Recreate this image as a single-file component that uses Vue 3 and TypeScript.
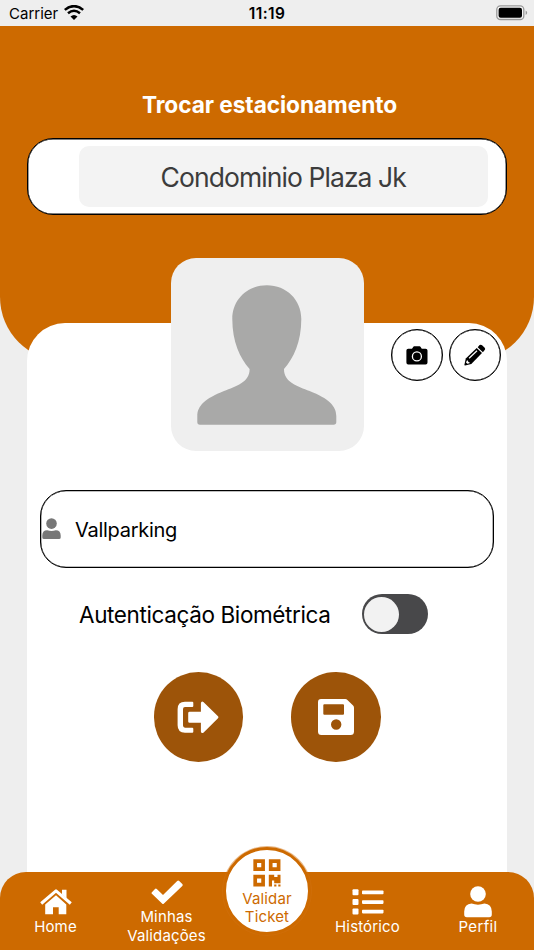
<script setup lang="ts">
import { ref } from 'vue'

const parking = ref('Condominio Plaza Jk')
const userName = ref('Vallparking')
const biometric = ref(false)
</script>

<template>
  <div class="screen">
    <div class="status">
      <div class="carrier">
        <span class="carrier-name">Carrier</span>
        <svg width="20" height="15" viewBox="0 0 20 15">
          <path d="M.8 4.9Q10-2.7 19.2 4.9" class="wave" />
          <path d="M4 8.2Q10 3.2 16 8.2" class="wave" />
          <path d="M6.5 11.6Q10 8.3 13.5 11.6L10 14.9Z" />
        </svg>
      </div>
      <span class="clock">11:19</span>
      <div class="battery">
        <svg width="32" height="16" viewBox="0 0 32 16">
          <rect x=".8" y=".9" width="27" height="13.6" rx="3.6" fill="#f6f6f6" stroke="#999" stroke-width="1.3" />
          <rect x="2.6" y="2.7" width="23.4" height="10" rx="2" />
          <path d="M29.6 5.4Q31.2 6.2 31.2 7.7T29.6 10Z" fill="#999" />
        </svg>
      </div>
    </div>

    <header class="hero">
      <h1 class="title">Trocar estacionamento</h1>
      <div class="selector">
        <button class="selector-value"><span>{{ parking }}</span></button>
      </div>
    </header>

    <main class="card">
      <div class="card-top">
        <div class="avatar">
          <svg width="140" height="140" viewBox="0 0 140 140">
            <path fill="#a9a9a8" d="M69.8.3C50 .3 35.3 15 35.3 34C35.3 57 43 73 52.6 84C53 97 39 101.5 27 106C8 113.5.3 121 .3 131V137Q.3 139.7 3 139.7H136.6Q139.3 139.7 139.3 137V131C139.3 121 131.6 113.5 112.6 106C100.6 101.5 86.6 97 87 84C96.6 73 104.3 57 104.3 34C104.3 15 89.6.3 69.8.3Z" />
          </svg>
        </div>
        <div class="tools">
          <button class="tool" aria-label="Foto">
            <svg width="22" height="19" viewBox="0 0 22 19">
              <path d="M2 2.8H6L7.2.9Q7.5.3 8.2.3H13.6Q14.3.3 14.6.9L15.8 2.8H19.6Q21.5 2.8 21.5 4.6V16.6Q21.5 18.5 19.6 18.5H2.2Q.4 18.5.4 16.6V4.6Q.4 2.8 2.2 2.8Z" />
              <circle cx="10.9" cy="10.4" r="4.5" fill="none" stroke="#fff" stroke-width="1.3" />
            </svg>
          </button>
          <button class="tool" aria-label="Editar">
            <svg width="22" height="22" viewBox="0 0 22 22">
              <path d="M13.7 3.2L15.6 1.1Q16.9.2 18.1 1.2L20.7 3.7Q21.7 4.9 20.7 6.1L18.900 8.300Z" />
              <path d="M12.700 3.900L18 9.100L7.300 19.900L1 21.500Q.3 21.400.4 20.700L1.800 14.500Z" />
              <path d="M5.100 14.200L13 6.700" stroke="#fff" stroke-width="1.2" />
              <path d="M2.900 16.400L4 16.600L4.300 17.900L5.600 18.200L5.500 19.200L3.400 19.800L2 18.500Z" fill="#fff" />
            </svg>
          </button>
        </div>
      </div>

      <div class="name-field">
        <svg width="19" height="22" viewBox="0 0 19 22" fill="#777">
          <circle cx="9.5" cy="5.6" r="5.3" />
          <path d="M5.2 12.2Q9.5 13.8 13.8 12.2Q18.6 12.3 18.7 17.4V19.4Q18.7 21 17 21H2Q.3 21 .3 19.4V17.4Q.4 12.3 5.2 12.2Z" />
        </svg>
        <span class="name">{{ userName }}</span>
      </div>

      <div class="bio">
        <span class="bio-label">Autenticação Biométrica</span>
        <button class="switch" :class="{ on: biometric }" role="switch" :aria-checked="biometric" @click="biometric = !biometric">
          <span class="knob"></span>
        </button>
      </div>

      <div class="actions">
        <button class="action exit" aria-label="Sair">
          <svg width="42" height="34" viewBox="0 0 42 34" fill="#fff">
            <path d="M15.3.8Q16.3.8 16.3 1.8V5Q16.3 6 15.3 6H8Q6 6 6 8V24.600Q6 26.700 8 26.700H15.300Q16.300 26.700 16.300 27.700V30.700Q16.300 31.700 15.300 31.700H8Q.6 31.700.6 24.300V8.200Q.6.800 8 .800Z" />
            <path d="M12.600 10.800H23.900V2.300Q24.200-.2 26.400.9L41 15.300Q41.800 16.300 41 17.300L26.400 31.700Q24.200 32.800 23.900 30.400V21.800H12.600Q11.200 21.800 11.200 20.400V12.200Q11.200 10.800 12.600 10.800Z" />
          </svg>
        </button>
        <button class="action" aria-label="Salvar">
          <svg width="38" height="38" viewBox="0 0 38 38">
            <path fill="#fff" fill-rule="evenodd" d="M4 1H28.300Q29.500 1 30.400 1.900L36.100 7.600Q37 8.500 37 9.700V33.500Q37 37 33.500 37H4.400Q1 37 1 33.500V4.300Q1 1 4 1ZM7.300 6.200Q6.300 6.200 6.300 7.200V15.700Q6.300 16.700 7.300 16.700H26Q27 16.700 27 15.700V7.200Q27 6.200 26 6.200ZM19.200 21.300A5.200 5.200 0 1 0 19.200 31.700A5.200 5.200 0 1 0 19.200 21.300Z" />
          </svg>
        </button>
      </div>
    </main>

    <nav class="tabs">
      <a class="tab">
        <svg width="32" height="26" viewBox="0 0 32 26" fill="#fff">
          <path d="M1.200 14.500L16 1.900L30.800 14.500" fill="none" stroke="#fff" stroke-width="3" stroke-linejoin="round" />
          <path d="M22 .7H26.500V9.600L22 5.600Z" />
          <path d="M5.200 15.600L16 6.200L26.300 15.600V25.200H18.700V18.300H13V25.200H5.200Z" />
        </svg>
        <span>Home</span>
      </a>
      <a class="tab tall">
        <svg width="32" height="25" viewBox="0 0 32 25">
          <path fill="#fff" d="M.9 12.200L4 8.900Q4.900 8.100 5.800 8.900L12 15L26.200 1Q27.200.1 28.200 1L31.300 4.100Q32.100 5 31.300 5.900L12.700 23.800Q12 24.300 11.300 23.800L.9 13.800Q.1 13 .9 12.200Z" />
        </svg>
        <span>Minhas<br />Validações</span>
      </a>
      <a class="tab center">
        <div class="bubble">
          <svg width="28" height="28" viewBox="0 0 28 28">
            <g fill="none" stroke="#cd6a00" stroke-width="3.700">
              <path d="M2.200 2.200H10.100V10.100H2.200Z" />
              <path d="M17.700 2.200H25.600V10.100H17.700Z" />
              <path d="M2.200 17.700H10.100V25.600H2.200Z" />
            </g>
            <path fill="#cd6a00" d="M15.800 15.800H21.200V18H24.500V15.800H27.500V24.200H21.200V21.500H19V27.400H15.800ZM21.200 25.500H23.400V27.500H21.200ZM25.300 25.500H27.500V27.500H25.300Z" />
          </svg>
          <span>Validar<br />Ticket</span>
        </div>
      </a>
      <a class="tab">
        <svg width="32" height="26" viewBox="0 0 32 26" fill="#fff">
          <rect x=".5" y=".3" width="6" height="6" rx="1" /><rect x="10" y="1.500" width="21.500" height="3.700" rx=".8" />
          <rect x=".5" y="10" width="6" height="6" rx="1" /><rect x="10" y="11.200" width="21.500" height="3.700" rx=".8" />
          <rect x=".5" y="19.500" width="6" height="6" rx="1" /><rect x="10" y="20.700" width="21.500" height="3.700" rx=".8" />
        </svg>
        <span>Histórico</span>
      </a>
      <a class="tab perfil">
        <svg width="28" height="32" viewBox="0 0 28 32" fill="#fff">
          <circle cx="14" cy="8" r="7.800" />
          <path d="M7.500 17.500Q14 19.800 20.500 17.500Q27.600 18 27.800 25.500V28.500Q27.800 31.200 25.200 31.200H2.800Q.2 31.200.2 28.500V25.500Q.4 18 7.500 17.500Z" />
        </svg>
        <span>Perfil</span>
      </a>
    </nav>
  </div>
</template>

<style>
body { margin: 0; background: #eee; }
</style>

<style scoped>
.screen {
  width: 534px;
  height: 950px;
  display: flex;
  flex-direction: column;
  overflow: hidden;
  background: #eee;
  color: #000;
  font-family: Inter, "Liberation Sans", sans-serif;
}
* { box-sizing: border-box; }
svg { display: block; flex: none; }
button { border: 0; padding: 0; font-family: inherit; color: inherit; }
.status {
  flex: none;
  height: 26px;
  padding: 0 6px 0 9px;
  display: grid;
  grid-template-columns: 1fr auto 1fr;
  align-items: center;
  font-size: 15px;
}
.carrier { display: flex; align-items: center; gap: 6px; padding-top: 1px; }
.carrier svg { margin-top: -2px; }
.wave { fill: none; stroke: #000; stroke-width: 2.5; }
.clock { width: 40px; margin-right: 3px; padding-top: 1px; text-align: center; font-size: 15.5px; font-weight: 600; letter-spacing: .4px; }
.battery { display: flex; justify-content: flex-end; }
.hero {
  flex: none;
  height: 335px;
  padding: 66px 27px 0;
  border-radius: 0 0 64px 64px;
  background: #cd6a00;
}
.title {
  margin: 0;
  padding-left: 5px;
  height: 26px;
  line-height: 26px;
  text-align: center;
  color: #fff;
  font-size: 22.7px;
  font-weight: 700;
  letter-spacing: -.07px;
  white-space: nowrap;
}
.selector {
  margin-top: 20px;
  height: 77px;
  padding: 7px 18px 7px 50.5px;
  border: 1.4px solid #000;
  border-radius: 26px;
  background: #fff;
  box-shadow: inset 0 0 0 .4px #000;
}
.selector-value {
  width: 100%;
  height: 61px;
  border-radius: 10px;
  background: #f3f3f3;
  color: #3c3c3c;
  font-size: 26.5px;
  letter-spacing: -.93px;
}
.card {
  flex: 1;
  min-height: 0;
  margin: -38.5px 27px -80px;
  padding: 0 13px;
  border-radius: 38px 38px 0 0;
  background: #fff;
}
.card-top {
  display: grid;
  grid-template-columns: 1fr 193px 1fr;
  margin: 0 -13px;
  height: 129px;
}
.avatar {
  grid-column: 2;
  width: 193px;
  height: 193px;
  margin-top: -64.2px;
  display: grid;
  place-items: center;
  border-radius: 25px;
  background: #efefef;
}
.tools { display: flex; justify-content: flex-end; gap: 6px; padding: 6.5px 6px 0 0; }
.tool {
  width: 52px;
  height: 52px;
  flex: none;
  display: grid;
  place-items: center;
  border: 1.3px solid #000;
  border-radius: 50%;
  background: #fff;
  box-shadow: inset 0 0 0 .3px #000;
}
.name-field {
  margin-top: 38.5px;
  height: 78px;
  display: flex;
  align-items: center;
  gap: 14px;
  padding-left: 1px;
  border: 1.3px solid #000;
  border-radius: 26px;
  box-shadow: inset 0 0 0 .3px #000;
  font-size: 20px;
  letter-spacing: -.28px;
}
.name { padding-top: 1px; }
.bio { display: flex; align-items: center; margin-top: 25.5px; padding-left: 39px; height: 41px; }
.bio-label { width: 283.4px; font-size: 22.5px; letter-spacing: -.38px; white-space: nowrap; }
.switch {
  width: 66px;
  height: 40px;
  display: flex;
  align-items: center;
  padding: 0 2px;
  border-radius: 20px;
  background: #48484a;
}
.switch.on { justify-content: flex-end; background: #cd6a00; }
.knob { width: 35px; height: 35px; border-radius: 50%; background: #f2f2f2; }
.actions { display: flex; justify-content: center; gap: 48px; margin-top: 37.5px; }
.action {
  width: 89.5px;
  height: 89.5px;
  display: grid;
  place-items: center;
  border-radius: 50%;
  background: #9d5409;
}
.exit svg { margin: 2px 1px 0 0; }
.tabs {
  flex: none;
  position: relative;
  height: 78px;
  display: grid;
  grid-template-columns: 111px 111px 90px 111px 111px;
  border-radius: 26px 26px 0 0;
  background: #cd6a00;
  color: #fff;
  font-size: 15px;
  letter-spacing: .15px;
  line-height: 18.5px;
  text-align: center;
}
.tab { display: flex; flex-direction: column; align-items: center; padding-top: 17px; gap: 2.900px; }
.tab.tall { padding-top: 8px; gap: 3px; }
.tab.perfil { padding: 14px 1px 0 0; gap: 0; letter-spacing: .35px; }
.tab.center { padding: 0; }
.bubble {
  width: 88px;
  height: 88px;
  margin-top: -25px;
  padding-top: 9px;
  display: flex;
  flex-direction: column;
  align-items: center;
  gap: 2.5px;
  border: 3px solid #cd6a00;
  border-radius: 50%;
  background: #fff;
  color: #cd6a00;
  box-shadow: 0 0 0 1px #d1721080;
}
</style>
